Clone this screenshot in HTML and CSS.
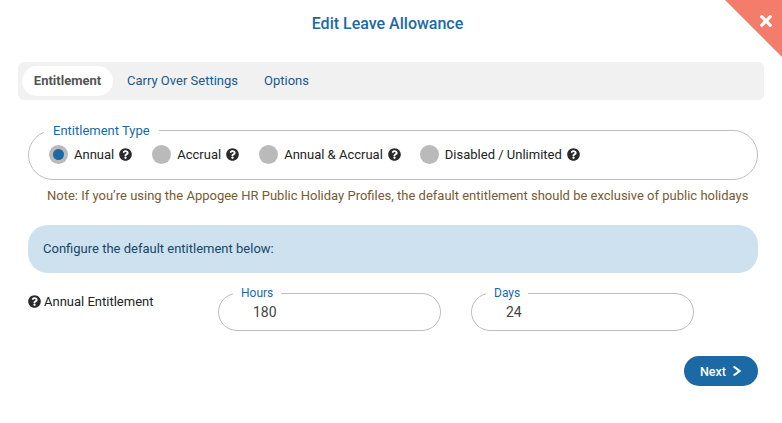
FILE: index.html
```html
<!DOCTYPE html>
<html lang="en">
<head>
<meta charset="utf-8">
<title>Edit Leave Allowance</title>
<link rel="stylesheet" href="styles.css">
</head>
<body>
<svg width="0" height="0" class="defs">
  <symbol id="q" viewBox="0 0 512 512"><path fill="currentColor" d="M504 256c0 136.997-111.043 248-248 248S8 392.997 8 256C8 119.083 119.043 8 256 8s248 111.083 248 248zM262.655 90c-54.497 0-89.255 22.957-116.549 63.758-3.536 5.286-2.353 12.415 2.715 16.258l34.699 26.31c5.205 3.947 12.621 3.008 16.665-2.122 17.864-22.658 30.113-35.797 57.303-35.797 20.429 0 45.698 13.148 45.698 32.958 0 14.976-12.363 22.667-32.534 33.976C247.128 238.528 216 254.941 216 296v4c0 6.627 5.373 12 12 12h56c6.627 0 12-5.373 12-12v-1.333c0-28.462 83.186-29.647 83.186-106.667 0-58.002-60.165-102-116.531-102zM256 338c-25.365 0-46 20.635-46 46 0 25.364 20.635 46 46 46s46-20.636 46-46c0-25.365-20.635-46-46-46z"/></symbol>
</svg>
<main class="modal">
  <button class="close" type="button" aria-label="Close">
    <svg class="close-x" viewBox="0 0 352 512"><path fill="currentColor" d="M242.72 256l100.07-100.07c12.28-12.28 12.28-32.19 0-44.48l-22.24-22.24c-12.28-12.28-32.19-12.28-44.48 0L176 189.28 75.93 89.21c-12.28-12.28-32.19-12.28-44.48 0L9.21 111.45c-12.28 12.28-12.28 32.19 0 44.48L109.28 256 9.21 356.07c-12.28 12.28-12.28 32.19 0 44.48l22.24 22.24c12.28 12.28 32.2 12.28 44.48 0L176 322.72l100.07 100.07c12.28 12.28 32.2 12.28 44.48 0l22.24-22.24c12.28-12.28 12.28-32.19 0-44.48L242.72 256z"/></svg>
  </button>
  <h1 class="title">Edit Leave Allowance</h1>
  <nav class="tabs">
    <a class="tab tab-active">Entitlement</a>
    <a class="tab">Carry Over Settings</a>
    <a class="tab">Options</a>
  </nav>
  <fieldset class="type-box">
    <legend class="legend">Entitlement Type</legend>
    <div class="radios">
      <label class="radio"><span class="dot dot-on"></span>Annual<svg class="q"><use href="#q"/></svg></label>
      <label class="radio"><span class="dot"></span>Accrual<svg class="q"><use href="#q"/></svg></label>
      <label class="radio radio-tight"><span class="dot"></span>Annual &amp; Accrual<svg class="q"><use href="#q"/></svg></label>
      <label class="radio"><span class="dot"></span>Disabled / Unlimited<svg class="q"><use href="#q"/></svg></label>
    </div>
  </fieldset>
  <p class="note">Note: If you’re using the Appogee HR Public Holiday Profiles, the default entitlement should be exclusive of public holidays</p>
  <div class="banner">Configure the default entitlement below:</div>
  <div class="entitlement">
    <div class="ent-label"><svg class="q q-left"><use href="#q"/></svg>Annual Entitlement</div>
    <fieldset class="field">
      <legend class="legend legend-small">Hours</legend>
      <span class="value">180</span>
    </fieldset>
    <fieldset class="field">
      <legend class="legend legend-small">Days</legend>
      <span class="value">24</span>
    </fieldset>
  </div>
  <div class="actions">
    <button class="next" type="button">Next<svg class="chev" viewBox="25 37 270 438" preserveAspectRatio="none"><path fill="currentColor" d="M285.476 272.971L91.132 467.314c-9.373 9.373-24.569 9.373-33.941 0l-22.667-22.667c-9.357-9.357-9.375-24.522-.04-33.901L188.505 256 34.484 101.255c-9.335-9.379-9.317-24.544.04-33.901l22.667-22.667c9.373-9.373 24.569-9.373 33.941 0L285.475 239.03c9.373 9.372 9.373 24.568.001 33.941z"/></svg></button>
  </div>
</main>
</body>
</html>
```
FILE: styles.css
```css
* { box-sizing: border-box; }
html, body { margin: 0; height: 100%; background: #fff; overflow: hidden; }
body { font-family: Roboto, "Liberation Sans", sans-serif; font-size: 13px; color: #333; }
.defs { position: absolute; }
.modal { position: relative; width: 782px; height: 423px; padding: 14px 24px 0 18px; }
.close { position: absolute; top: 0; right: 0; width: 57px; height: 57px; padding: 0; border: 0; background: #f47c6a; clip-path: polygon(0 0, 100% 0, 100% 100%); color: #fff; }
.close-x { position: absolute; top: 12px; right: 10px; width: 12px; height: 18px; }
.title { margin: 0; height: 19px; font-size: 16px; line-height: 19px; font-weight: 500; color: #1b6aa5; text-align: center; width: 739px; }
.tabs { display: flex; align-items: center; height: 38px; margin-top: 29px; width: 746px; padding: 0 4px; background: #f1f1f1; border-radius: 6px; }
.tab { display: block; height: 30px; padding: 0 13px; line-height: 30px; border-radius: 15px; color: #175a8c; font-size: 13px; white-space: nowrap; }
.tab-active { width: 91px; margin-right: 1px; padding: 0; text-align: center; background: #fff; color: #555; font-weight: 700; }
.type-box { display: block; width: 730px; height: 57px; margin: 23px 0 0 10px; padding: 0 0 0 20px; border: 1px solid #bdbdbd; border-radius: 25px; }
.legend { padding: 0 9px; margin-left: -5px; font-size: 13px; line-height: 15px; color: #1b6aa5; }
.radios { display: flex; align-items: center; height: 20px; margin-top: 6px; }
.radio { display: flex; align-items: center; margin-right: 20px; font-size: 13px; color: #222; }
.radio-tight { margin-right: 19px; }
.dot { position: relative; width: 19px; height: 19px; margin-right: 6px; border-radius: 50%; background: #bababa; }
.dot-on::after { content: ""; position: absolute; top: 4px; left: 4px; width: 11px; height: 11px; border-radius: 50%; background: #1b6aa5; }
.q { width: 13px; height: 13px; margin-left: 5px; color: #2a2a2a; }
.q-left { margin: 0 3px 0 0; }
.note { margin: 8px 0 0; padding-left: 29px; font-size: 13px; line-height: 16px; color: #7a5a2f; white-space: nowrap; }
.banner { width: 730px; height: 48px; margin: 21px 0 0 10px; padding-left: 15px; line-height: 48px; border-radius: 20px; background: #cde2ee; color: #17466b; font-size: 13px; }
.entitlement { display: flex; align-items: flex-start; margin: 13px 0 0 10px; }
.ent-label { display: flex; align-items: center; width: 190px; margin-top: 8px; font-size: 13px; color: #222; }
.field { display: block; width: 223px; height: 45px; margin: 0 30px 0 0; padding: 0 0 0 34px; border: 1px solid #bdbdbd; border-radius: 19px; }
.legend-small { padding: 0 8px; margin-left: -20px; font-size: 12px; }
.value { display: block; margin-top: 3px; font-size: 14px; line-height: 16px; color: #444; }
.actions { display: flex; justify-content: flex-end; margin: 25px 0 0; width: 740px; }
.next { display: flex; align-items: center; justify-content: center; width: 74px; height: 30px; padding: 0 1px 0 0; border: 0; border-radius: 15px; background: #1b6aa5; color: #fff; font: 500 12.5px Roboto, sans-serif; }
.chev { width: 8px; height: 10px; margin-left: 7px; }
```
